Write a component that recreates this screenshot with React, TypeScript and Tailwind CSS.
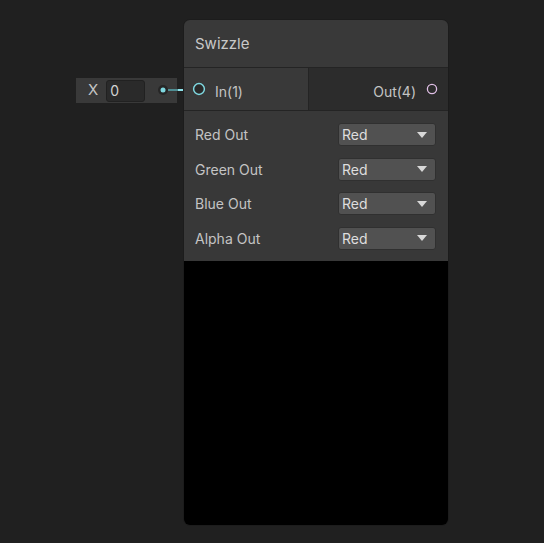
const rows = ["Red Out", "Green Out", "Blue Out", "Alpha Out"];

function Dropdown({ value }: { value: string }) {
	return (
		<div className="flex items-center justify-between w-[98px] h-[23px] rounded-[3px] bg-[#515151] border border-[#303030] pl-[3px] pr-[8px] text-[14px] text-[#dedede]">
			<span>{value}</span>
			<svg width="10" height="6" viewBox="0 0 10 6">
				<path d="M0 0 L10 0 L5 6 Z" fill="#d8d8d8" />
			</svg>
		</div>
	);
}

function App() {
	return (
		<div
			className="relative w-[544px] h-[543px] bg-[#202020] overflow-hidden"
			style={{ fontFamily: "Inter, 'Noto Sans', sans-serif" }}
		>
			{/* inline input field */}
			<div className="absolute left-[76px] top-[78px] w-[101px] h-[25px] bg-[#393939] flex items-center">
				<span className="ml-[12px] text-[15px] text-[#c4c4c4]">X</span>
				<div className="ml-[8px] w-[39px] h-[22px] rounded-[3px] bg-[#2a2a2a] border border-[#212121] flex items-center pl-[3px] text-[14px] text-[#d2d2d2]">
					0
				</div>
			</div>

			{/* connector */}
			<svg className="absolute left-[156px] top-[82px]" width="52" height="16" viewBox="0 0 52 16">
				<circle cx="7" cy="8" r="5" fill="#262626" />
				<circle cx="7" cy="8" r="2.5" fill="#7fd8e0" />
				<line x1="12" y1="8" x2="22" y2="8" stroke="#4f8d92" strokeWidth="2" />
				<line x1="22" y1="8" x2="28" y2="8" stroke="#8ee4ec" strokeWidth="2" />
				<line x1="28" y1="8" x2="38" y2="8" stroke="#4f8d92" strokeWidth="2" />
			</svg>

			{/* node */}
			<div className="absolute left-[183px] top-[19px] w-[266px] h-[507px] rounded-[7px] overflow-hidden border border-[#1c1c1c] flex flex-col">
				<div className="h-[48px] bg-[#393939] flex items-center pl-[11px] pt-[2px] text-[15px] text-[#c8c8c8] border-b border-[#242424]">
					Swizzle
				</div>
				<div className="h-[43px] flex border-b border-[#242424]">
					<div className="w-[125px] bg-[#393939] flex items-center border-r border-[#242424]">
						<svg className="ml-[8px]" width="14" height="14" viewBox="0 0 14 14">
							<circle cx="7" cy="7" r="5.4" fill="#2a2a2a" stroke="#7fd8e0" strokeWidth="1.5" />
						</svg>
						<span className="ml-[9px] mt-[5px] text-[14px] text-[#c4c4c4]">In(1)</span>
					</div>
					<div className="flex-1 bg-[#2c2c2c] flex items-center justify-end pr-[10px]">
						<span className="mt-[5px] text-[14px] text-[#c4c4c4]">Out(4)</span>
						<svg className="ml-[10px]" width="12" height="12" viewBox="0 0 12 12">
							<circle cx="6" cy="6" r="4.6" fill="none" stroke="#e0bfe6" strokeWidth="1.3" />
						</svg>
					</div>
				</div>
				<div className="h-[150px] bg-[#383838] flex flex-col gap-[11.5px] pt-[12px] pl-[11px] pr-[12px]">
					{rows.map((r) => (
						<div key={r} className="flex items-center justify-between h-[23px]">
							<span className="text-[14px] text-[#c4c4c4]">{r}</span>
							<Dropdown value="Red" />
						</div>
					))}
				</div>
				<div className="flex-1 bg-black" />
			</div>
		</div>
	);
}

export default App;
